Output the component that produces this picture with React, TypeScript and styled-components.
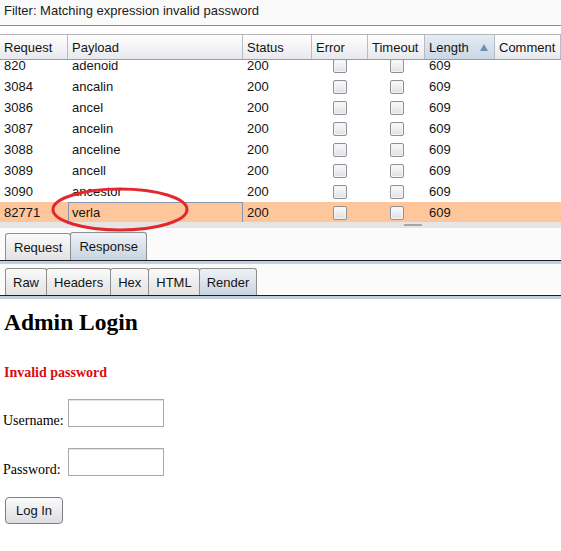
import React from "react";
import styled, { createGlobalStyle, css } from "styled-components";

const GlobalStyle = createGlobalStyle`
  html, body { margin: 0; padding: 0; background: #ffffff; }
  body { font-family: "Liberation Sans", Arial, sans-serif; font-size: 13px; color: #111; }
`;

const Page = styled.div`
  width: 561px;
  height: 551px;
  overflow: hidden;
  display: flex;
  flex-direction: column;
  background: #fbfbfb;
`;

const FilterBar = styled.div`
  height: 25px;
  line-height: 22px;
  padding-left: 4px;
  background: #fafafa;
  border-bottom: 1px solid #8c8c8c;
  color: #1a1a1a;
  font-size: 13px;
`;

const Gap = styled.div<{ $h: number; $bg?: string }>`
  height: ${(p) => p.$h}px;
  background: ${(p) => p.$bg ?? "#ffffff"};
  flex: none;
`;

const TableWrap = styled.div`
  position: relative;
  background: #ffffff;
`;

const COLS = "68px 175px 69px 56px 57px 70px 66px";

const HeaderRow = styled.div`
  display: grid;
  grid-template-columns: ${COLS};
  height: 24px;
  border-top: 1px solid #b4b4b4;
  border-bottom: 1px solid #9c9c9c;
  position: relative;
  z-index: 1;
`;

const HeaderCell = styled.div<{ $sorted?: boolean }>`
  display: flex;
  align-items: center;
  justify-content: space-between;
  padding: 0 4px;
  border-right: 1px solid #b8bcc2;
  background: ${(p) =>
    p.$sorted
      ? "linear-gradient(#e4ecf4, #c9d7e5)"
      : "linear-gradient(#ffffff, #f4f4f6 50%, #e6e8ec)"};
  color: #141414;
  white-space: nowrap;
  overflow: hidden;
`;

const SortArrow = styled.span`
  width: 0;
  height: 0;
  border-left: 4px solid transparent;
  border-right: 4px solid transparent;
  border-bottom: 7px solid #6f8fb2;
  margin-right: 2px;
`;

const BodyViewport = styled.div`
  height: 162px;
  overflow: hidden;
`;

const BodyInner = styled.div`
  margin-top: -5px;
`;

const Row = styled.div<{ $selected?: boolean }>`
  display: grid;
  grid-template-columns: ${COLS};
  height: 21px;
  background: ${(p) => (p.$selected ? "#ffc59b" : "#ffffff")};
`;

const Cell = styled.div<{ $center?: boolean; $focus?: boolean }>`
  display: flex;
  align-items: center;
  padding-left: 4px;
  justify-content: ${(p) => (p.$center ? "center" : "flex-start")};
  ${(p) => p.$center && css`padding-left: 0;`}
  ${(p) =>
    p.$focus &&
    css`
      border: 1px solid #8496b0;
      padding-left: 3px;
    `}
  color: #141414;
  white-space: nowrap;
`;

const Check = styled.span`
  display: inline-block;
  width: 12px;
  height: 12px;
  border: 1px solid #8e9196;
  border-radius: 2px;
  background: linear-gradient(#fbfbfb, #dfe0e3);
  box-shadow: inset 0 0 0 1px #f4f4f4;
`;

const Ellipse = styled.svg`
  position: absolute;
  left: 49px;
  top: 151px;
  pointer-events: none;
  z-index: 2;
  overflow: visible;
`;

const Divider = styled.div`
  height: 6px;
  background: #e5e5e5;
  display: flex;
  justify-content: flex-start;
  padding-left: 404px;
`;

const Grip = styled.span`
  width: 18px;
  height: 2px;
  margin-top: 2px;
  background: #a6a6a6;
`;

const TabStrip = styled.div`
  display: flex;
  align-items: flex-end;
  padding-left: 5px;
  background: #fbfbfb;
`;

const Tab = styled.div<{ $active?: boolean; $h: number; $pad: number }>`
  height: ${(p) => p.$h}px;
  padding: 0 ${(p) => p.$pad}px;
  display: flex;
  align-items: center;
  font-size: 13px;
  color: #141414;
  border: 1px solid #8e8e8e;
  border-bottom: none;
  border-radius: 3px 3px 0 0;
  margin-right: -1px;
  background: ${(p) =>
    p.$active
      ? "linear-gradient(#eef2f6, #c7d4e1)"
      : "linear-gradient(#fafafa, #e2e2e2)"};
`;

const TabLine = styled.div`
  height: 3px;
  border-top: 1px solid #1a1f2c;
  background: #c3cfdb;
`;

const Render = styled.div`
  flex: 1;
  background: #ffffff;
  padding-left: 4px;
  font-family: "Liberation Serif", "Times New Roman", serif;
  color: #000;
  display: flex;
  flex-direction: column;
  align-items: flex-start;
`;

const Heading = styled.h2`
  margin: 9px 0 0 0;
  font-size: 23.5px;
  line-height: 28px;
  font-weight: bold;
`;

const Error = styled.div`
  margin-top: 28px;
  font-size: 14px;
  line-height: 18px;
  font-weight: bold;
  color: #d40e0e;
`;

const FieldRow = styled.div<{ $mt: number }>`
  margin-top: ${(p) => p.$mt}px;
  display: flex;
  align-items: flex-end;
`;

const Label = styled.span`
  font-size: 14px;
  line-height: 18px;
  margin-bottom: -3px;
  margin-left: -1px;
  width: 65px;
`;

const Input = styled.div`
  width: 94px;
  height: 26px;
  border: 1px solid #a9a9a9;
  background: #ffffff;
  box-shadow: inset 0 1px 0 #e2e2e2;
`;

const Button = styled.div`
  margin-top: 21px;
  margin-left: 1px;
  width: 56px;
  height: 25px;
  border: 1px solid #7d7f84;
  border-radius: 4px;
  background: linear-gradient(#fbfbfb, #dcdde1);
  display: flex;
  align-items: center;
  justify-content: center;
  font-family: "Liberation Sans", Arial, sans-serif;
  font-size: 13px;
  color: #111;
`;

const rows = [
  ["820", "adenoid"],
  ["3084", "ancalin"],
  ["3086", "ancel"],
  ["3087", "ancelin"],
  ["3088", "anceline"],
  ["3089", "ancell"],
  ["3090", "ancestor"],
  ["82771", "verla"],
];

const headers = ["Request", "Payload", "Status", "Error", "Timeout", "Length", "Comment"];

export default function App() {
  return (
    <Page>
      <GlobalStyle />
      <FilterBar>Filter: Matching expression invalid password</FilterBar>
      <Gap $h={8} />
      <TableWrap>
        <HeaderRow>
          {headers.map((h) => (
            <HeaderCell key={h} $sorted={h === "Length"}>
              <span>{h}</span>
              {h === "Length" && <SortArrow />}
            </HeaderCell>
          ))}
        </HeaderRow>
        <BodyViewport>
          <BodyInner>
            {rows.map(([id, payload], i) => {
              const sel = i === rows.length - 1;
              return (
                <Row key={id} $selected={sel}>
                  <Cell>{id}</Cell>
                  <Cell $focus={sel}>{payload}</Cell>
                  <Cell>200</Cell>
                  <Cell $center>
                    <Check />
                  </Cell>
                  <Cell $center>
                    <Check />
                  </Cell>
                  <Cell>609</Cell>
                  <Cell />
                </Row>
              );
            })}
          </BodyInner>
        </BodyViewport>
        <Ellipse width="142" height="48" viewBox="0 0 142 48">
          <ellipse cx="71" cy="24.5" rx="67" ry="20.5" fill="none" stroke="#e2282e" strokeWidth="3" />
        </Ellipse>
      </TableWrap>
      <Divider>
        <Grip />
      </Divider>
      <Gap $h={4} $bg="#fbfbfb" />
      <TabStrip>
        <Tab $h={26} $pad={8}>Request</Tab>
        <Tab $h={27} $pad={8} $active>
          Response
        </Tab>
      </TabStrip>
      <TabLine />
      <Gap $h={4} $bg="#fbfbfb" />
      <TabStrip>
        <Tab $h={26} $pad={7}>Raw</Tab>
        <Tab $h={26} $pad={7}>Headers</Tab>
        <Tab $h={26} $pad={7}>Hex</Tab>
        <Tab $h={26} $pad={7}>HTML</Tab>
        <Tab $h={26} $pad={7} $active>
          Render
        </Tab>
      </TabStrip>
      <TabLine />
      <Render>
        <Heading>Admin Login</Heading>
        <Error>Invalid password</Error>
        <FieldRow $mt={17}>
          <Label>Username:</Label>
          <Input />
        </FieldRow>
        <FieldRow $mt={21}>
          <Label>Password:</Label>
          <Input />
        </FieldRow>
        <Button>Log In</Button>
      </Render>
    </Page>
  );
}
